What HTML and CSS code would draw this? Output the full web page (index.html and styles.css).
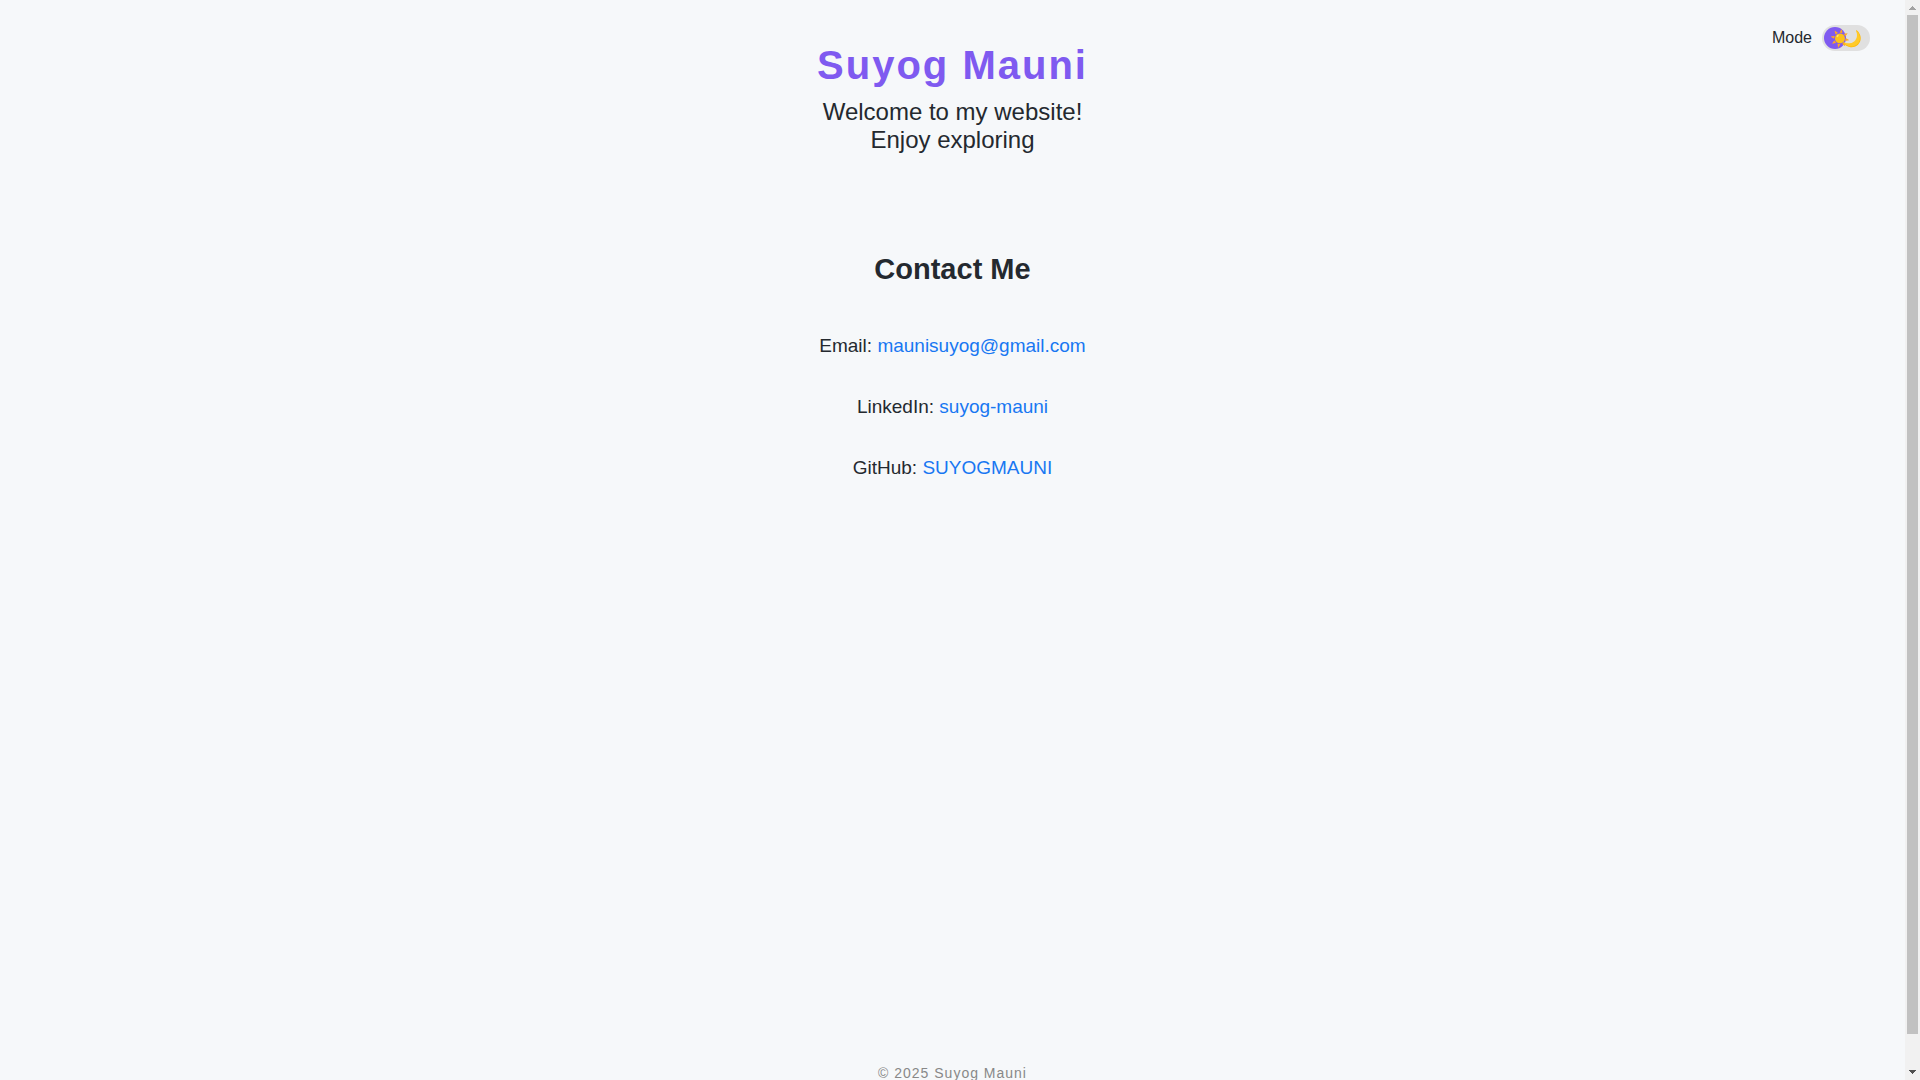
FILE: index.html
```html
<!DOCTYPE html>
<html lang="en">
<head>
<meta charset="utf-8">
<meta name="viewport" content="width=device-width, initial-scale=1">
<title>Suyog Mauni</title>
<link rel="stylesheet" href="styles.css">
</head>
<body>
<div class="window">
  <div class="viewport">
    <div class="page">
      <label class="mode">
        <span>Mode</span>
        <span class="switch">
          <input class="switch-input" type="checkbox">
          <span class="sun">☀️</span>
          <span class="moon">🌙</span>
        </span>
      </label>
      <header class="header">
        <h1 class="name">Suyog Mauni</h1>
        <p class="welcome">Welcome to my website!<br>Enjoy exploring</p>
      </header>
      <main class="contact">
        <h2 class="contact-title">Contact Me</h2>
        <p class="contact-line">Email: <a class="link" href="mailto:maunisuyog@gmail.com">maunisuyog@gmail.com</a></p>
        <p class="contact-line">LinkedIn: <a class="link" href="#linkedin">suyog-mauni</a></p>
        <p class="contact-line">GitHub: <a class="link" href="#github">SUYOGMAUNI</a></p>
      </main>
      <footer class="footer">© 2025 Suyog Mauni</footer>
    </div>
  </div>
  <div class="scrollbar" aria-hidden="true">
    <svg class="arrow" viewBox="0 0 15 15" shape-rendering="crispEdges"><path d="M7 6h1v1h1v1h1v1h1v1H4V9h1V8h1V7h1z" fill="#a3a3a3"/></svg>
    <div class="track"><div class="thumb"></div></div>
    <svg class="arrow" viewBox="0 0 15 15" shape-rendering="crispEdges"><path d="M4 5h7v1h-1v1H9v1H8v1H7V8H6V7H5V6H4z" fill="#505050"/></svg>
  </div>
</div>
</body>
</html>
```

FILE: styles.css
```css
* {
  box-sizing: border-box;
}

body {
  margin: 0;
  background: #f6f8fa;
  color: #24292f;
  font-family: "Liberation Sans", Arial, sans-serif;
}

h1,
h2,
p {
  margin: 0;
  font-weight: normal;
}

.window {
  display: flex;
  height: 100vh;
}

.viewport {
  flex: 1;
  min-width: 0;
  overflow-x: hidden;
  overflow-y: auto;
  scrollbar-width: none;
}

.page {
  position: relative;
  display: flex;
  flex-direction: column;
  min-height: calc(100% + 32px);
  text-align: center;
}

.mode {
  position: absolute;
  top: 25px;
  right: 35px;
  display: flex;
  align-items: center;
  gap: 10px;
  font-size: 16px;
}

.switch {
  position: relative;
  width: 48px;
  height: 26px;
}

.switch-input {
  display: block;
  width: 48px;
  height: 26px;
  margin: 0;
  padding: 2px;
  appearance: none;
  border-radius: 13px;
  background: #e0e0e0;
}

.switch-input::before {
  content: "";
  display: block;
  width: 22px;
  height: 22px;
  border-radius: 50%;
  background: #7f5af0;
}

.switch-input:checked::before {
  margin-left: 22px;
}

.sun,
.moon {
  position: absolute;
  top: 5px;
  font-size: 16px;
  line-height: 18px;
  pointer-events: none;
}

.sun {
  left: 8px;
}

.moon {
  right: 8px;
}

.header {
  padding: 42px 16px 0;
}

.name {
  color: #7f5af0;
  font-size: 40px;
  font-weight: bold;
  letter-spacing: 2px;
  line-height: 46px;
}

.welcome {
  padding-top: 10px;
  font-size: 24px;
  line-height: 28px;
}

.contact {
  flex: 1 0 auto;
  padding: 98px 16px 40px;
}

.contact-title {
  padding-bottom: 29px;
  font-size: 29px;
  font-weight: bold;
  line-height: 34px;
}

.contact-line {
  font-size: 19px;
  line-height: 61px;
}

.link {
  color: #1877f2;
  text-decoration: none;
}

.footer {
  flex: none;
  padding: 31px 16px;
  color: #888;
  font-size: 14px;
  letter-spacing: 1px;
  line-height: 16px;
}

.scrollbar {
  display: flex;
  flex-direction: column;
  flex: none;
  width: 15px;
  background: #f1f1f1;
}

.arrow {
  flex: none;
  width: 15px;
  height: 15px;
}

.track {
  flex: 1;
  padding: 0 2px;
}

.thumb {
  height: 97%;
  background: #c1c1c1;
}
```
